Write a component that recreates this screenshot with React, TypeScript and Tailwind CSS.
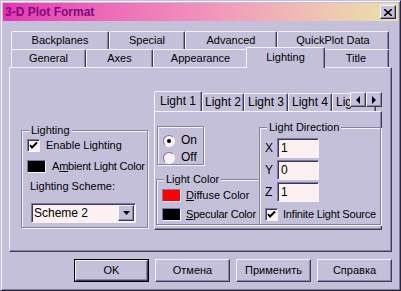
import React from "react";

const font = "font-['Liberation_Sans',Arial,sans-serif] text-[11px] leading-[13px] text-black whitespace-nowrap";

const Check = () => (
  <div className="w-[13px] h-[13px] shrink-0 bg-[#fcf0f0] border-t border-l border-[#7c78a0] border-b border-r border-b-[#f6f4ff] border-r-[#f6f4ff] shadow-[inset_1px_1px_0_#3c3858] flex items-center justify-center">
    <svg width="9" height="9" viewBox="0 0 9 9">
      <polyline points="1,4 3,6.5 8,1.5" fill="none" stroke="#000" strokeWidth="2" />
    </svg>
  </div>
);

const Radio = ({ on }: { on?: boolean }) => (
  <div className="w-[12px] h-[12px] shrink-0 rounded-full bg-[#fcf0f0] border border-t-[#7c78a0] border-l-[#7c78a0] border-b-[#f6f4ff] border-r-[#f6f4ff] flex items-center justify-center">
    {on && <div className="w-[4px] h-[4px] rounded-full bg-black" />}
  </div>
);

const Swatch = ({ color }: { color: string }) => (
  <div className="w-[19px] h-[13px] shrink-0 border border-t-[#7c78a0] border-l-[#7c78a0] border-b-[#f6f4ff] border-r-[#f6f4ff] shadow-[inset_1px_1px_0_#3c3858]">
    <div className={`w-full h-full ${color}`} />
  </div>
);

const Input = ({ value }: { value: string }) => (
  <div className="w-[42px] h-[20px] bg-[#fcf0f0] border border-t-[#7c78a0] border-l-[#7c78a0] border-b-[#f6f4ff] border-r-[#f6f4ff] shadow-[inset_1px_1px_0_#3c3858] pl-[3px] pt-[3px]">
    {value}
  </div>
);

const Group = ({
  label,
  className,
  children,
}: {
  label: string;
  className: string;
  children: React.ReactNode;
}) => (
  <fieldset
    className={`border border-[#8480a6] shadow-[1px_1px_0_#f6f4ff,inset_1px_1px_0_#f6f4ff] min-w-0 ${className}`}
  >
    <legend className="ml-[7px] px-[2px] bg-[#c4c0da] leading-[13px]">{label}</legend>
    {children}
  </fieldset>
);

const Tab = ({ label, className }: { label: string; className: string }) => (
  <div
    className={`h-[18px] shrink-0 flex items-center justify-center border-l border-t border-[#f4f2ff] border-r border-r-[#3e3a5c] shadow-[inset_-1px_0_0_#8a86aa] rounded-tl-[2px] rounded-tr-[2px] ${className}`}
  >
    {label}
  </div>
);

const Btn = ({ label, def }: { label: string; def?: boolean }) => (
  <div
    className={`w-[75px] h-[23px] flex items-center justify-center ${
      def ? "border border-black" : ""
    }`}
  >
    <div className="w-full h-full flex items-center justify-center border-l border-t border-[#f4f2ff] border-r border-b border-r-[#3e3a5c] border-b-[#3e3a5c] shadow-[inset_-1px_-1px_0_#8a86aa]">
      {label}
    </div>
  </div>
);

const Arrow = ({ dir }: { dir: "l" | "r" }) => (
  <div className="w-[16px] h-[15px] bg-[#c4c0da] flex items-center justify-center border-l border-t border-[#f4f2ff] border-r border-b border-r-[#3e3a5c] border-b-[#3e3a5c] shadow-[inset_-1px_-1px_0_#8a86aa]">
    <svg width="5" height="8" viewBox="0 0 5 8">
      {dir === "l" ? <polygon points="4,0 4,8 0,4" fill="#000" /> : <polygon points="0,0 0,8 4,4" fill="#000" />}
    </svg>
  </div>
);

export default function App() {
  return (
    <div className={`w-[401px] h-[291px] bg-[#c4c0da] ${font} border border-t-[#c4c0da] border-l-[#c4c0da] border-b-[#2a2640] border-r-[#2a2640] shadow-[inset_1px_1px_0_#f6f4ff,inset_-1px_-1px_0_#7c78a0] p-[2px] flex flex-col`}>
      {/* title bar */}
      <div className="h-[18px] bg-linear-to-r from-[#e632b2] via-[#f190bb] to-[#e9e3a8] flex items-center justify-between pl-[2px] pr-[2px]">
        <span className="font-bold text-[12px] text-[#7d0a80]">3-D Plot Format</span>
        <div className="w-[16px] h-[14px] bg-[#c4c0da] flex items-center justify-center border-l border-t border-[#f4f2ff] border-r border-b border-r-[#2a2640] border-b-[#2a2640] shadow-[inset_-1px_-1px_0_#8a86aa]">
          <svg width="8" height="7" viewBox="0 0 8 7">
            <path d="M0 0 L8 7 M8 0 L0 7" stroke="#000" strokeWidth="1.6" />
          </svg>
        </div>
      </div>

      {/* tabs */}
      <div className="ml-[6px] mt-[10px] w-[383px] flex flex-col">
        <div className="flex pl-[2px]">
          <Tab label="Backplanes" className="w-[98px]" />
          <Tab label="Special" className="w-[76px]" />
          <Tab label="Advanced" className="w-[92px]" />
          <Tab label="QuickPlot Data" className="w-[112px]" />
        </div>
        <div className="flex items-end pl-[2px] h-[18px]">
          <Tab label="General" className="w-[75px]" />
          <Tab label="Axes" className="w-[67px]" />
          <Tab label="Appearance" className="w-[95px]" />
          <div className="relative z-10 w-[79px] h-[21px] -mx-[2px] -mb-[1px] shrink-0 bg-[#c4c0da] flex items-center justify-center pb-[2px] border-l border-t border-[#f4f2ff] border-r border-r-[#3e3a5c] shadow-[inset_-1px_0_0_#8a86aa] rounded-tl-[2px] rounded-tr-[2px]">
            Lighting
          </div>
          <Tab label="Title" className="w-[66px]" />
        </div>

        {/* main panel */}
        <div className="w-[383px] h-[185px] border-l border-t border-[#f4f2ff] border-r border-b border-r-[#3e3a5c] border-b-[#3e3a5c] shadow-[inset_-1px_-1px_0_#8a86aa] flex items-start">
          <Group label="Lighting" className="ml-[11px] mt-[56px] w-[127px] h-[104px]">
            <div className="flex flex-col pl-[5px]">
              <div className="flex items-center gap-[6px] mt-[2px]">
                <Check />
                <span>Enable Lighting</span>
              </div>
              <div className="flex items-center gap-[6px] mt-[8px]">
                <Swatch color="bg-black" />
                <span className="tracking-[-0.2px]">
                  A<u>m</u>bient Light Color
                </span>
              </div>
              <div className="ml-[3px] mt-[7px]">Lighting Scheme:</div>
              <div className="ml-[4px] mt-[10px] w-[105px] h-[20px] bg-[#fcf0f0] border border-t-[#7c78a0] border-l-[#7c78a0] border-b-[#f6f4ff] border-r-[#f6f4ff] shadow-[inset_1px_1px_0_#3c3858] flex items-center justify-between pl-[2px] pr-[1px]">
                <span className="text-[12px]">Scheme 2</span>
                <div className="w-[16px] h-[16px] bg-[#c4c0da] flex items-center justify-center border-l border-t border-[#f4f2ff] border-r border-b border-r-[#3e3a5c] border-b-[#3e3a5c] shadow-[inset_-1px_-1px_0_#8a86aa]">
                  <svg width="7" height="4" viewBox="0 0 7 4">
                    <polygon points="0,0 7,0 3.5,4" fill="#000" />
                  </svg>
                </div>
              </div>
            </div>
          </Group>

          {/* inner tab control */}
          <div className="ml-[6px] mt-[22px] w-[228px] flex flex-col">
            <div className="relative flex items-end h-[21px] overflow-hidden">
              <div className="relative z-10 w-[48px] h-[21px] shrink-0 bg-[#c4c0da] flex items-center justify-center pb-[1px] border-l border-t border-[#f4f2ff] border-r border-r-[#3e3a5c] shadow-[inset_-1px_0_0_#8a86aa] rounded-tl-[2px] rounded-tr-[2px] -mb-[1px] text-[12px]">
                Light 1
              </div>
              <Tab label="Light 2" className="w-[42px] text-[12px]" />
              <Tab label="Light 3" className="w-[44px] text-[12px]" />
              <Tab label="Light 4" className="w-[44px] text-[12px]" />
              <Tab label="Light 5" className="w-[44px] text-[12px] justify-start pl-[3px]" />
              <div className="absolute right-0 top-[2px] z-20 flex">
                <Arrow dir="l" />
                <Arrow dir="r" />
              </div>
            </div>
            <div className="w-[228px] h-[119px] border-l border-t border-[#f4f2ff] border-r border-b border-r-[#3e3a5c] border-b-[#3e3a5c] shadow-[inset_-1px_-1px_0_#8a86aa] flex items-start">
              <div className="ml-[1px] w-[104px] flex flex-col">
                <div className="ml-[1px] mt-[14px] w-[47px] h-[39px] border border-[#8480a6] shadow-[1px_1px_0_#f6f4ff,inset_1px_1px_0_#f6f4ff] flex flex-col pl-[5px] pt-[7px] gap-[4px] text-[12px]">
                  <div className="flex items-center gap-[6px]">
                    <Radio on />
                    <span>On</span>
                  </div>
                  <div className="flex items-center gap-[6px]">
                    <Radio />
                    <span>Off</span>
                  </div>
                </div>
                <Group label="Light Color" className="mt-[8px] w-[104px] h-[52px]">
                  <div className="flex flex-col pl-[5px] mt-[3px] gap-[6px]">
                    <div className="flex items-center gap-[5px]">
                      <Swatch color="bg-[#ff0000]" />
                      <span>
                        <u>D</u>iffuse Color
                      </span>
                    </div>
                    <div className="flex items-center gap-[5px]">
                      <Swatch color="bg-black" />
                      <span className="tracking-[-0.2px]">
                        <u>S</u>pecular Color
                      </span>
                    </div>
                  </div>
                </Group>
              </div>
              <Group label="Light Direction" className="-ml-[1px] mt-[9px] w-[122px] h-[104px]">
                <div className="flex flex-col pl-[5px] mt-[4px] gap-[2px] text-[12px]">
                  {[
                    ["X", "1"],
                    ["Y", "0"],
                    ["Z", "1"],
                  ].map(([k, v]) => (
                    <div key={k} className="flex items-center">
                      <span className="w-[12px]">{k}</span>
                      <Input value={v} />
                    </div>
                  ))}
                  <div className="flex items-center gap-[5px] mt-[4px] text-[11px]">
                    <Check />
                    <span className="tracking-[-0.2px]">Infinite Light Source</span>
                  </div>
                </div>
              </Group>
            </div>
          </div>
        </div>
      </div>

      {/* buttons */}
      <div className="flex justify-end gap-[6px] mt-[7px] pr-[6px]">
        <Btn label="OK" def />
        <Btn label="Отмена" />
        <Btn label="Применить" />
        <Btn label="Справка" />
      </div>
    </div>
  );
}
